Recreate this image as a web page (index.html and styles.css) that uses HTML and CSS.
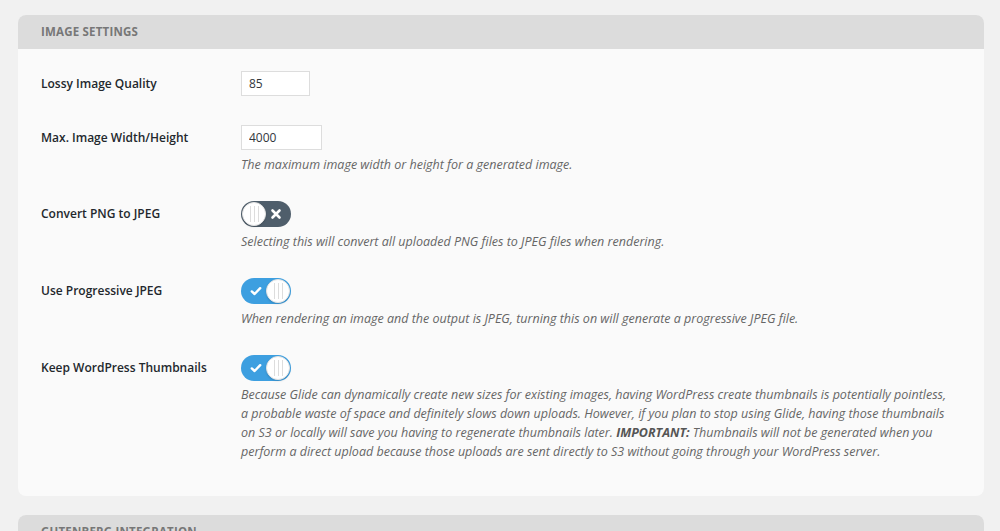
FILE: index.html
```
<!DOCTYPE html>
<html lang="en">
<head>
    <meta charset="UTF-8">
    <meta name="viewport" content="width=device-width, initial-scale=1.0">
    <title>Image Settings</title>
    <link rel="stylesheet" href="styles.css">
</head>
<body>

    <!-- image settings -->
    <div class="panel">
        <div class="panelHead">Image Settings</div>
        <div class="panelBody">

            <div class="row first">
                <div class="label">Lossy Image Quality</div>
                <div class="field">
                    <input type="text" class="num small" value="85">
                </div>
            </div>

            <div class="row">
                <div class="label">Max. Image Width/Height</div>
                <div class="field">
                    <input type="text" class="num" value="4000">
                    <p class="desc">The maximum image width or height for a generated image.</p>
                </div>
            </div>

            <div class="row">
                <div class="label">Convert PNG to JPEG</div>
                <div class="field">
                    <div class="toggle">
                        <span class="knob"><i></i><i></i><i></i></span>
                        <svg class="icon" width="12" height="12" viewBox="0 0 12 12"><path d="M2.5 2.5 L9.5 9.5 M9.5 2.5 L2.5 9.5" stroke="#fff" stroke-width="2.6" stroke-linecap="round"/></svg>
                    </div>
                    <p class="desc">Selecting this will convert all uploaded PNG files to JPEG files when rendering.</p>
                </div>
            </div>

            <div class="row">
                <div class="label">Use Progressive JPEG</div>
                <div class="field">
                    <div class="toggle on">
                        <svg class="icon" width="12" height="12" viewBox="0 0 12 12"><path d="M1.8 6.4 L4.6 9 L10.2 3.2" fill="none" stroke="#fff" stroke-width="2.4" stroke-linecap="round" stroke-linejoin="round"/></svg>
                        <span class="knob"><i></i><i></i><i></i></span>
                    </div>
                    <p class="desc">When rendering an image and the output is JPEG, turning this on will generate a progressive JPEG file.</p>
                </div>
            </div>

            <div class="row">
                <div class="label">Keep WordPress Thumbnails</div>
                <div class="field">
                    <div class="toggle on">
                        <svg class="icon" width="12" height="12" viewBox="0 0 12 12"><path d="M1.8 6.4 L4.6 9 L10.2 3.2" fill="none" stroke="#fff" stroke-width="2.4" stroke-linecap="round" stroke-linejoin="round"/></svg>
                        <span class="knob"><i></i><i></i><i></i></span>
                    </div>
                    <p class="desc long">Because Glide can dynamically create new sizes for existing images, having WordPress create thumbnails is potentially pointless, a probable waste of space and definitely slows down uploads. However, if you plan to stop using Glide, having those thumbnails on S3 or locally will save you having to regenerate thumbnails later. <b>IMPORTANT:</b> Thumbnails will not be generated when you perform a direct upload because those uploads are sent directly to S3 without going through your WordPress server.</p>
                </div>
            </div>

        </div>
    </div>

    <!-- gutenberg -->
    <div class="panel">
        <div class="panelHead">Gutenberg Integration</div>
        <div class="panelBody"></div>
    </div>

</body>
</html>
```

FILE: styles.css
```
body{
    margin: 0;
    padding: 15px 16px 0 18px;
    background-color: #f1f1f1;
    font-family: "Open Sans", sans-serif;
    color: #32373c;
}

.panel{
    background-color: #fafafa;
    border-radius: 8px;
    margin-bottom: 19px;
    overflow: hidden;
}

.panelHead{
    height: 34px;
    line-height: 34px;
    padding-left: 23px;
    background-color: #dcdcdc;
    color: #777;
    font-size: 11.5px;
    letter-spacing: 0.2px;
    font-weight: 700;
    text-transform: uppercase;
}

.panelBody{
    padding: 22px 23px 35px;
    display: flex;
    flex-direction: column;
    gap: 27px;
}

.row{
    display: flex;
}

.row.first{
    margin-bottom: 2px;
}

.label{
    width: 200px;
    flex-shrink: 0;
    font-size: 12px;
    font-weight: 600;
    line-height: 25px;
    color: #23282d;
}

.field{
    flex: 1;
}

.num{
    display: block;
    box-sizing: border-box;
    width: 81px;
    height: 25px;
    margin: 0;
    padding: 0 7px;
    border: 1px solid #ddd;
    background-color: #fff;
    font-family: "Open Sans", sans-serif;
    font-size: 12px;
    color: #32373c;
}

.num.small{
    width: 69px;
}

.desc{
    margin: 5px 0 0;
    font-family: "Open Sans", sans-serif;
    font-style: italic;
    font-size: 12.5px;
    line-height: 19px;
    color: #666;
}

.desc.long{
    max-width: 712px;
    margin-top: 4px;
}

.desc b{
    font-weight: 700;
    color: #555;
}

.toggle{
    box-sizing: border-box;
    width: 50px;
    height: 26px;
    border-radius: 13px;
    background-color: #4f5e6b;
    display: flex;
    align-items: center;
    justify-content: space-between;
    padding: 0 1px;
}

.toggle .icon{
    margin: 0 8px 0 0;
}

.toggle.on{
    background-color: #3d9fe0;
}

.toggle.on .icon{
    margin: 0 0 0 8px;
}

.knob{
    box-sizing: border-box;
    width: 24px;
    height: 24px;
    border-radius: 50%;
    background-color: #fff;
    border: 1px solid #e3e3e3;
    display: flex;
    justify-content: center;
    align-items: center;
    gap: 3px;
    box-shadow: 0 1px 2px rgba(0,0,0,0.15);
}

.knob i{
    width: 1px;
    height: 16px;
    background-color: #ddd;
}
```
